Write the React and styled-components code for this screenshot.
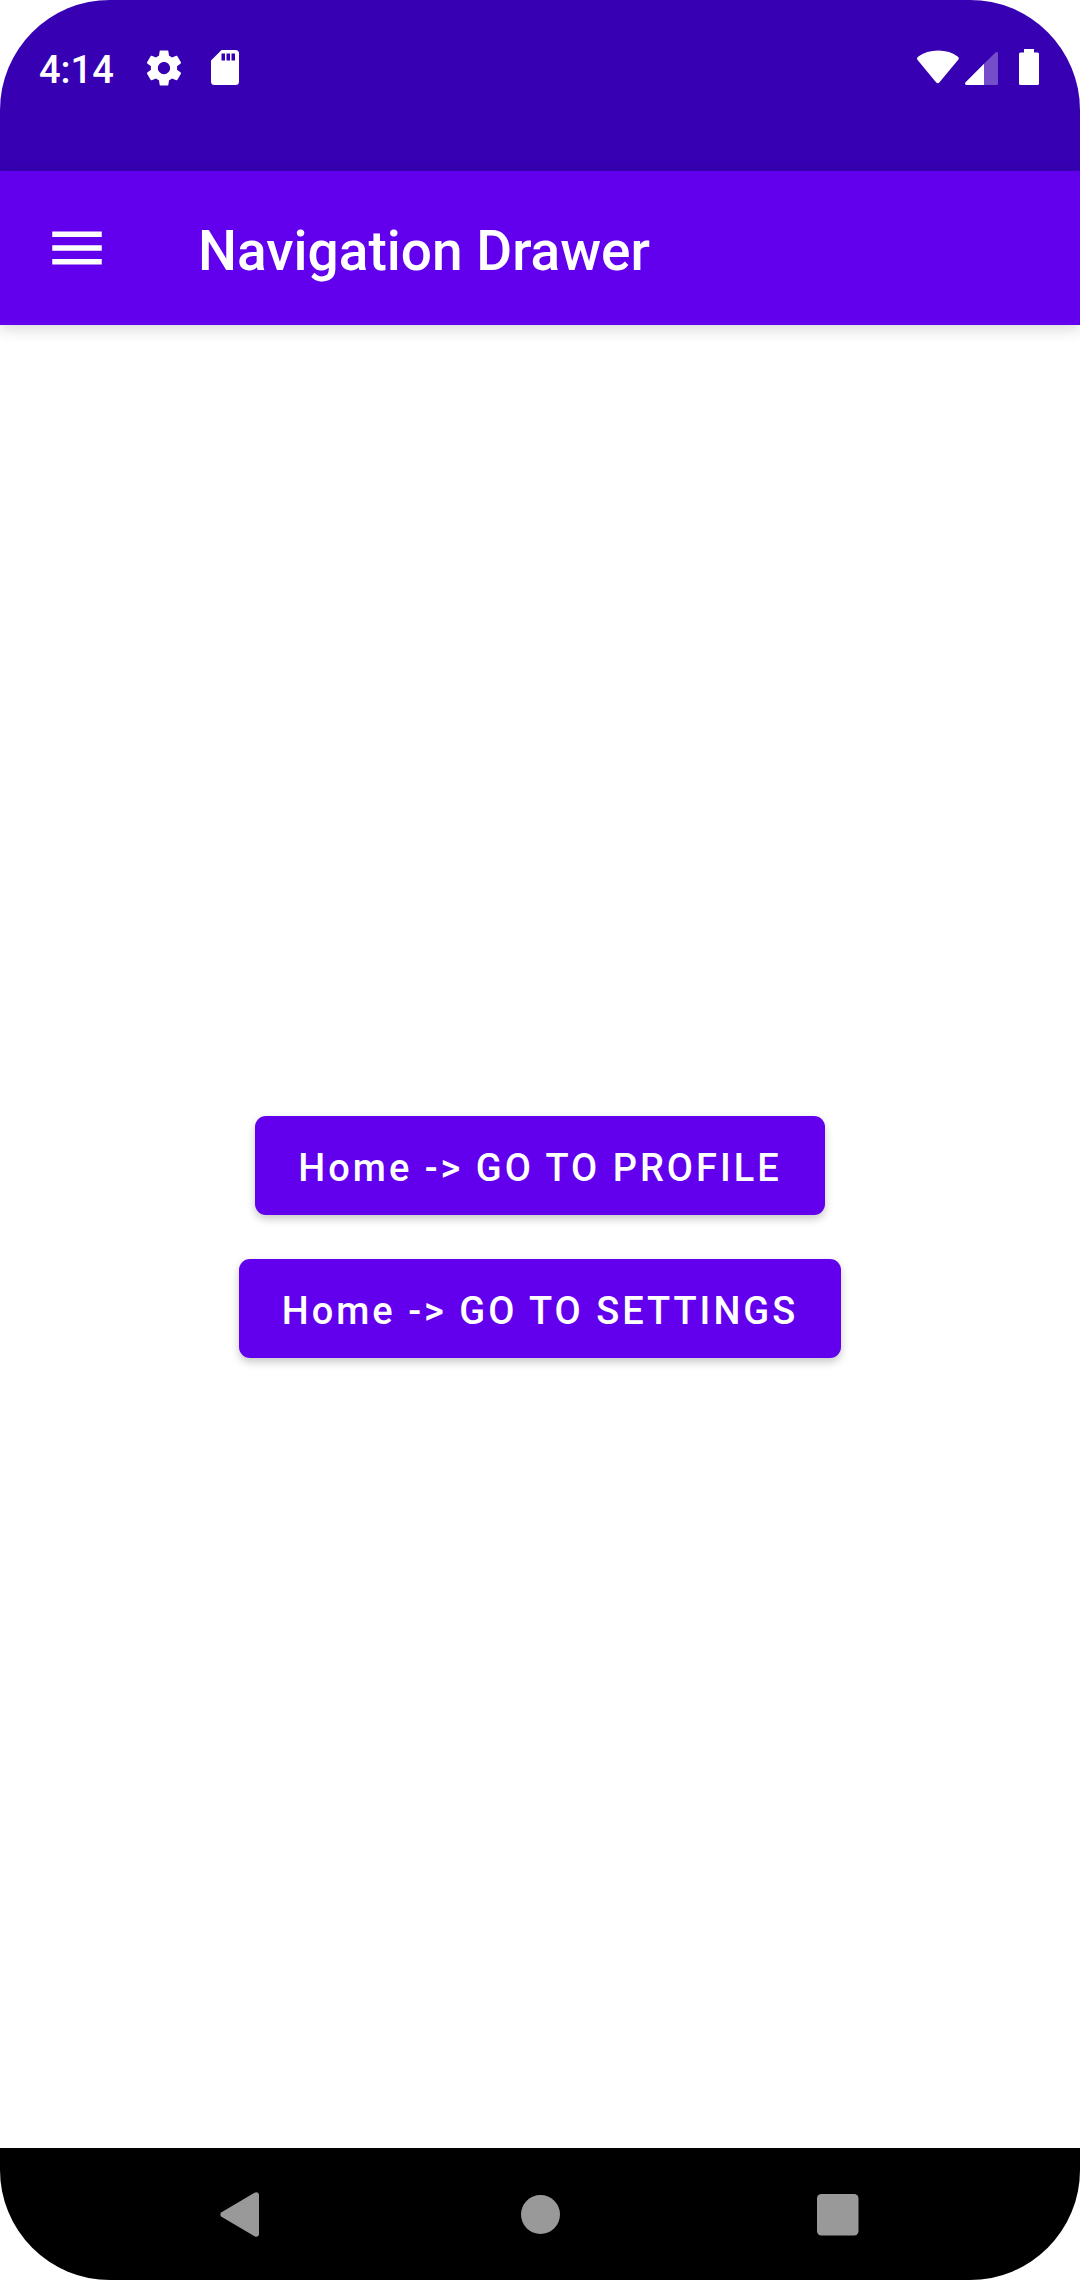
import React from "react";
import styled, { createGlobalStyle } from "styled-components";

const color = {
  primary: "#6200ee",
  primaryDark: "#3700b3",
  onPrimary: "#ffffff",
  surface: "#ffffff",
  navIcon: "#999999",
};

const GlobalStyle = createGlobalStyle`
  *, *::before, *::after { box-sizing: border-box; }
  body {
    margin: 0;
    background: #ffffff;
    font-family: Roboto, "Noto Sans", sans-serif;
  }
`;

const Screen = styled.div`
  display: flex;
  flex-direction: column;
  min-height: 100vh;
  overflow: hidden;
  border-radius: 110px;
  background: ${color.surface};
`;

const StatusBar = styled.header`
  display: flex;
  align-items: center;
  justify-content: space-between;
  height: 171px;
  padding: 0 41px 35px 39px;
  background: ${color.primaryDark};
  color: ${color.onPrimary};
`;

const StatusGroup = styled.div`
  display: flex;
  align-items: center;
  gap: ${({ $gap }) => $gap}px;
`;

const Clock = styled.time`
  padding-top: 4px;
  margin-right: 10px;
  font-size: 38px;
  font-weight: 500;
  line-height: 46px;
`;

const Icon = styled.svg`
  display: block;
  flex: none;
  width: ${({ $width }) => $width}px;
  height: ${({ $height }) => $height}px;
`;

const AppBar = styled.div`
  position: relative;
  display: flex;
  align-items: center;
  gap: 88px;
  height: 154px;
  padding: 0 44px;
  background: ${color.primary};
  color: ${color.onPrimary};
  box-shadow: 0 4px 14px rgba(0, 0, 0, 0.16);
`;

const IconButton = styled.button`
  display: flex;
  align-items: center;
  justify-content: center;
  padding: 0;
  border: 0;
  background: none;
  color: inherit;
  cursor: pointer;
`;

const Title = styled.h1`
  margin: 0;
  padding-top: 6px;
  font-size: 55px;
  font-weight: 500;
  line-height: 64px;
`;

const Content = styled.main`
  display: flex;
  flex: 1;
  flex-direction: column;
  align-items: center;
  justify-content: center;
  gap: 44px;
`;

const ContainedButton = styled.button`
  height: 99px;
  padding: 5px 43px 0;
  border: 0;
  border-radius: 11px;
  background: ${color.primary};
  color: ${color.onPrimary};
  box-shadow: 0 4px 8px rgba(0, 0, 0, 0.22);
  font-family: inherit;
  font-size: 38px;
  font-weight: 500;
  letter-spacing: 3px;
  line-height: 46px;
  white-space: nowrap;
  cursor: pointer;
`;

const NavigationBar = styled.nav`
  display: grid;
  grid-template-columns: repeat(3, 1fr);
  height: 132px;
  padding: 0 93px;
  background: #000000;
  color: ${color.navIcon};
`;

function SettingsIcon() {
  return (
    <Icon $width={42} $height={42} viewBox="0 0 24 24" fill="currentColor" aria-hidden="true">
      <path d="M19.43 12.98c.04-.32.07-.64.07-.98s-.03-.66-.07-.98l2.11-1.65c.19-.15.24-.42.12-.64l-2-3.46c-.12-.22-.39-.3-.61-.22l-2.49 1c-.52-.4-1.08-.73-1.69-.98l-.38-2.65C14.46 2.18 14.25 2 14 2h-4c-.25 0-.46.18-.49.42l-.38 2.65c-.61.25-1.17.59-1.69.98l-2.49-1c-.23-.09-.49 0-.61.22l-2 3.46c-.13.22-.07.49.12.64l2.11 1.65c-.04.32-.07.65-.07.98s.03.66.07.98l-2.11 1.65c-.19.15-.24.42-.12.64l2 3.46c.12.22.39.3.61.22l2.49-1c.52.4 1.08.73 1.69.98l.38 2.65c.03.24.24.42.49.42h4c.25 0 .46-.18.49-.42l.38-2.65c.61-.25 1.17-.59 1.69-.98l2.49 1c.23.09.49 0 .61-.22l2-3.46c.12-.22.07-.49-.12-.64l-2.11-1.65zM12 15.5c-1.93 0-3.5-1.57-3.5-3.5s1.57-3.5 3.5-3.5 3.5 1.57 3.5 3.5-1.57 3.5-3.5 3.5z" />
    </Icon>
  );
}

function SdCardIcon() {
  return (
    <Icon $width={42} $height={42} viewBox="0 0 42 42" fill="currentColor" aria-hidden="true">
      <path
        fillRule="evenodd"
        d="M17.5 3H31.5a3.5 3.5 0 0 1 3.5 3.5V34.5a3.5 3.5 0 0 1-3.5 3.5H10.5a3.5 3.5 0 0 1-3.5-3.5V13.5zM17.5 6.5v7h3.5v-7zM22.5 6.5v7h3.5v-7zM27.5 6.5v7h3.5v-7z"
      />
    </Icon>
  );
}

function WifiIcon() {
  return (
    <Icon $width={42} $height={42} viewBox="0 0 42 42" fill="currentColor" aria-hidden="true">
      <path d="M1 9.8Q9.5 3.5 21.2 3.5T41 9.8Q42.4 11.2 41.2 12.8L22.5 35.3Q20.8 37 19 35.3L.4 12.8Q-.6 11.2 1 9.8z" />
    </Icon>
  );
}

function SignalIcon() {
  return (
    <Icon $width={34} $height={42} viewBox="0 0 34 42" fill="currentColor" aria-hidden="true">
      <path
        fillOpacity="0.3"
        d="M19 16.8L30.5 5.5Q31.5 4.7 32.3 5 33 5.3 33 6.5V36.8Q33 38 31.8 38H19z"
      />
      <path d="M2 38Q0 38 0 36.5 0 35.8.6 35.2L19 16.8V38z" />
    </Icon>
  );
}

function BatteryIcon() {
  return (
    <Icon $width={34} $height={42} viewBox="-14 0 34 42" fill="currentColor" aria-hidden="true">
      <path d="M5 2H15V5.5H18.5Q20 5.5 20 7V36.5Q20 38 18.5 38H1.5Q0 38 0 36.5V7Q0 5.5 1.5 5.5H5z" />
    </Icon>
  );
}

function MenuIcon() {
  return (
    <Icon $width={66} $height={66} viewBox="0 0 24 24" fill="currentColor" aria-hidden="true">
      <path d="M3 18h18v-2H3v2zm0-5h18v-2H3v2zm0-7v2h18V6H3z" />
    </Icon>
  );
}

function BackIcon() {
  return (
    <Icon $width={60} $height={60} viewBox="0 0 60 60" fill="currentColor" aria-hidden="true">
      <path d="M9.5 28.2L42.5 8.8Q44.5 7.8 46 8.8 47 9.5 47 11V50Q47 51.5 46 52.3 44.5 53.2 42.5 52.2L9.5 32.8Q7.2 30.5 9.5 28.2z" />
    </Icon>
  );
}

function HomeIcon() {
  return (
    <Icon $width={60} $height={60} viewBox="0 0 60 60" fill="currentColor" aria-hidden="true">
      <circle cx="30.5" cy="30.5" r="19.5" />
    </Icon>
  );
}

function OverviewIcon() {
  return (
    <Icon $width={60} $height={60} viewBox="0 0 60 60" fill="currentColor" aria-hidden="true">
      <rect x="9" y="10" width="41.5" height="41.5" rx="4.5" />
    </Icon>
  );
}

const destinations = ["Home -> GO TO PROFILE", "Home -> GO TO SETTINGS"];

export default function App() {
  return (
    <>
      <GlobalStyle />
      <Screen>
        <StatusBar>
          <StatusGroup $gap={19}>
            <Clock>4:14</Clock>
            <SettingsIcon />
            <SdCardIcon />
          </StatusGroup>
          <StatusGroup $gap={6}>
            <WifiIcon />
            <SignalIcon />
            <BatteryIcon />
          </StatusGroup>
        </StatusBar>
        <AppBar>
          <IconButton type="button" aria-label="Open navigation drawer">
            <MenuIcon />
          </IconButton>
          <Title>Navigation Drawer</Title>
        </AppBar>
        <Content>
          {destinations.map((label) => (
            <ContainedButton key={label} type="button">
              {label}
            </ContainedButton>
          ))}
        </Content>
        <NavigationBar aria-label="System navigation">
          <IconButton type="button" aria-label="Back">
            <BackIcon />
          </IconButton>
          <IconButton type="button" aria-label="Home">
            <HomeIcon />
          </IconButton>
          <IconButton type="button" aria-label="Overview">
            <OverviewIcon />
          </IconButton>
        </NavigationBar>
      </Screen>
    </>
  );
}
